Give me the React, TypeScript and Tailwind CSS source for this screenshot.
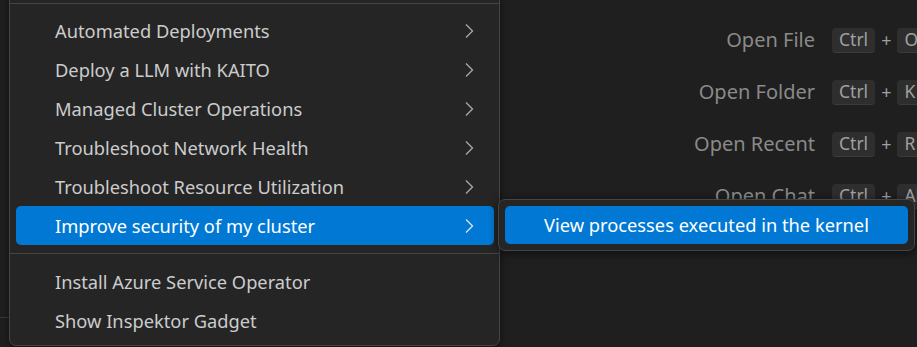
import { ReactNode } from 'react';

const menuItems = [
  { label: 'Automated Deployments', sub: true },
  { label: 'Deploy a LLM with KAITO', sub: true },
  { label: 'Managed Cluster Operations', sub: true },
  { label: 'Troubleshoot Network Health', sub: true },
  { label: 'Troubleshoot Resource Utilization', sub: true },
  { label: 'Improve security of my cluster', sub: true, active: true },
];

const moreItems = ['Install Azure Service Operator', 'Show Inspektor Gadget'];

const shortcuts = [
  { label: 'Open File', keys: ['Ctrl', 'O'] },
  { label: 'Open Folder', keys: ['Ctrl', 'K'] },
  { label: 'Open Recent', keys: ['Ctrl', 'R'] },
  { label: 'Open Chat', keys: ['Ctrl', 'Alt'] },
];

function Chevron({ active }: { active?: boolean }) {
  return (
    <svg width="10" height="16" viewBox="0 0 10 16" fill="none">
      <polyline
        points="2,1.5 8.5,8 2,14.5"
        stroke={active ? '#cfe3f7' : '#a6a6a6'}
        strokeWidth="1.4"
      />
    </svg>
  );
}

function Key({ children }: { children: ReactNode }) {
  return (
    <span className="inline-flex h-[25px] shrink-0 items-center rounded-[4px] border-b border-[#3b3b3b] bg-[#2e2e2e] px-[7px] text-[17.5px] text-[#a0a0a0]">
      {children}
    </span>
  );
}

function Row({ label, active, sub }: { label: string; active?: boolean; sub?: boolean }) {
  return (
    <div
      className={`mx-[6px] mr-[5px] flex h-[39px] items-center justify-between rounded-[5px] pl-[39px] pr-[20px] ${
        active ? 'bg-[#0078d4] text-white' : 'text-[#cccccc]'
      }`}
    >
      <span>{label}</span>
      {sub && <Chevron active={active} />}
    </div>
  );
}

export default function App() {
  return (
    <div className="relative flex h-[347px] w-[917px] overflow-hidden bg-[#1f1f1f] font-['Segoe_UI','Noto_Sans',sans-serif] text-[18.3px]">
      {/* left edge of the workbench */}
      <div className="flex w-[9px] shrink-0 flex-col">
        <div className="h-[317px]" />
        <div className="border-t border-[#3a3a3a]" />
      </div>

      {/* editor watermark */}
      <div className="min-w-0 flex-1 whitespace-nowrap pl-[606px] pt-[14px]">
        {shortcuts.map((s) => (
          <div key={s.label} className="flex h-[52px] items-center">
            <span className="w-[200px] shrink-0 text-right text-[20px] text-[#8a8a8a]">{s.label}</span>
            <span className="ml-[17px] flex shrink-0 items-center">
              <Key>{s.keys[0]}</Key>
              <span className="mx-[6px] text-[18px] text-[#a0a0a0]">+</span>
              <Key>{s.keys[1]}</Key>
            </span>
          </div>
        ))}
      </div>

      {/* context menu */}
      <div className="absolute left-[9px] top-[-4px] w-[491px] rounded-b-[7px] border border-[#454545] bg-[#252526] pb-[5px] shadow-[0_2px_8px_rgba(0,0,0,0.5)]">
        <div className="mb-[7px] mt-[6px] h-px bg-[#454545]" />
        {menuItems.map((m) => (
          <Row key={m.label} label={m.label} sub={m.sub} active={m.active} />
        ))}
        <div className="my-[8px] h-px bg-[#454545]" />
        {moreItems.map((m) => (
          <Row key={m} label={m} />
        ))}
      </div>

      {/* submenu */}
      <div className="absolute left-[498px] top-[199px] w-[417px] rounded-[7px] border border-[#454545] bg-[#252526] p-[6px] shadow-[0_2px_10px_rgba(0,0,0,0.6)]">
        <div className="flex h-[38px] items-center rounded-[5px] bg-[#0078d4] pl-[39px] text-white">
          View processes executed in the kernel
        </div>
      </div>
    </div>
  );
}
